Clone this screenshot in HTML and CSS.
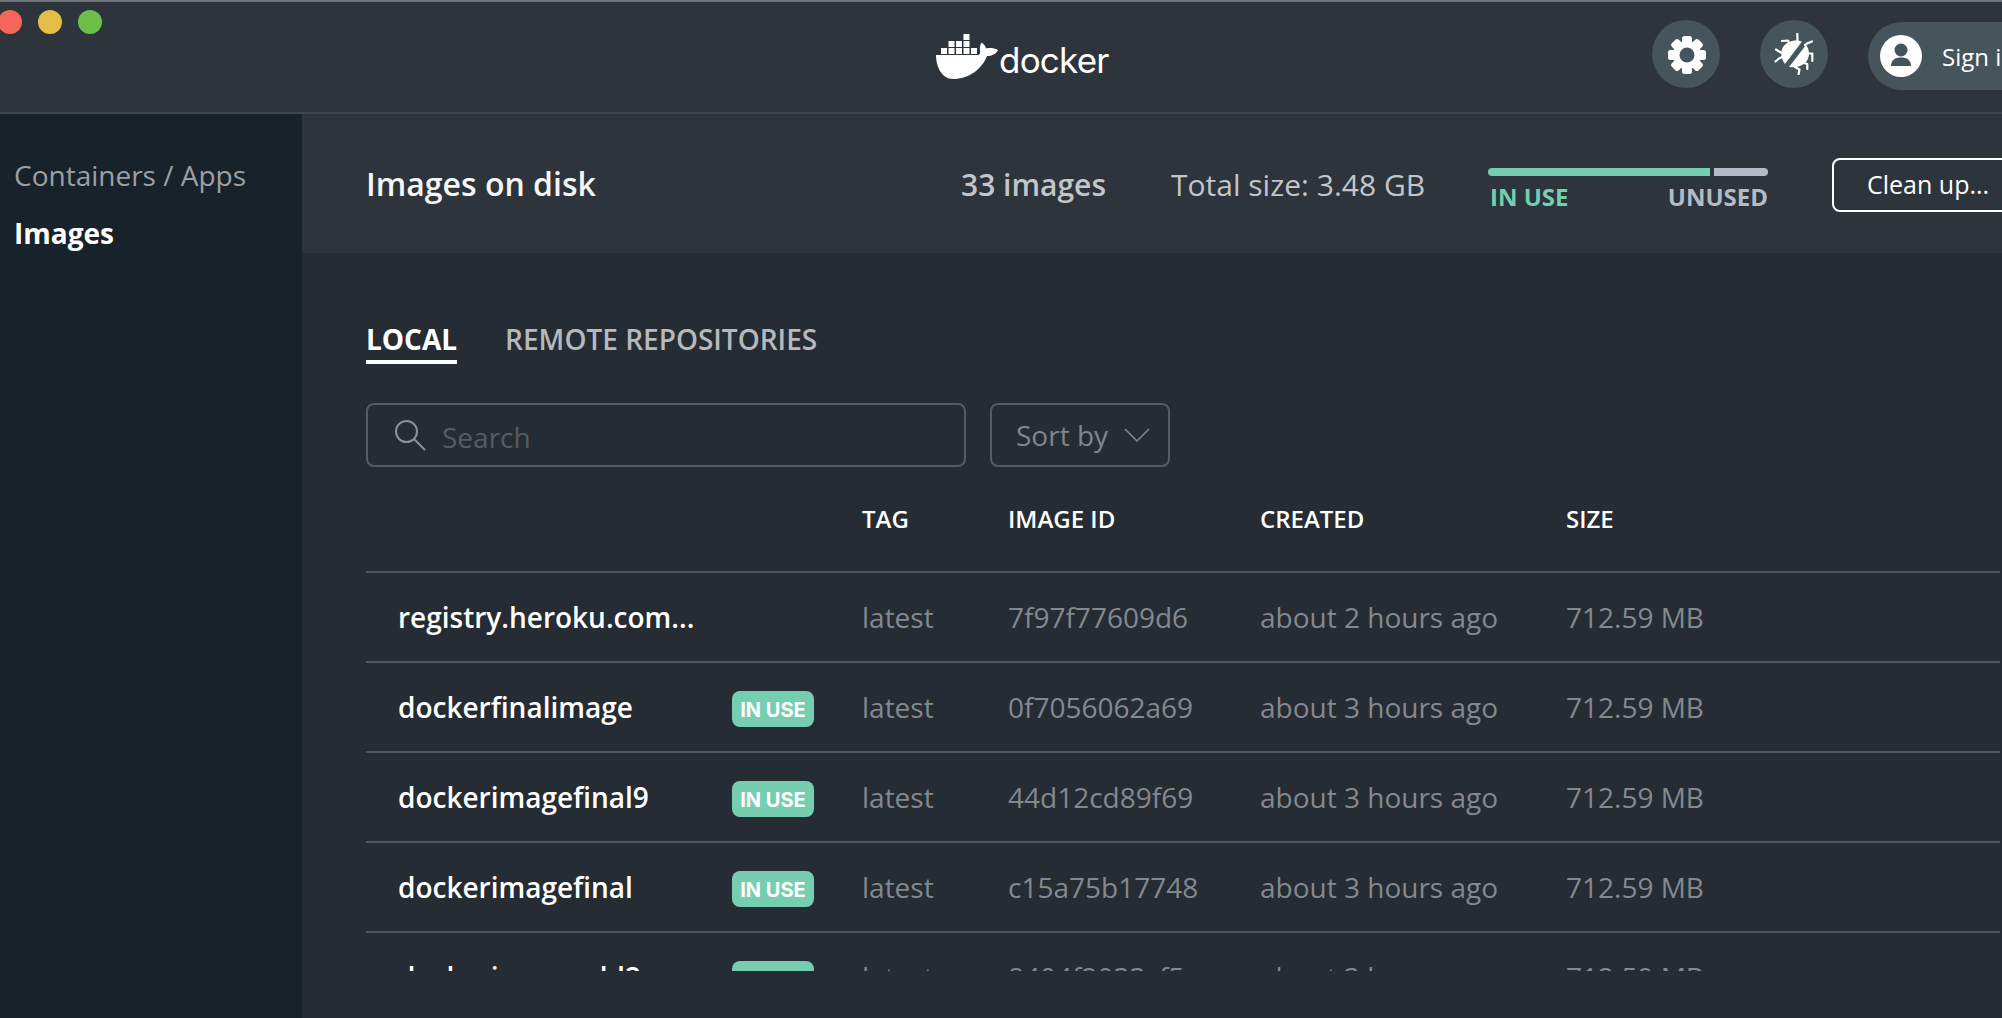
FILE: index.html
```html
<!DOCTYPE html>
<html lang="en">

<head>
    <meta charset="UTF-8">
    <title>Docker Desktop - Images</title>
    <link rel="stylesheet" href="styles.css">
</head>

<body>
    <header class="titlebar">
        <div class="traffic">
            <span class="dot red"></span>
            <span class="dot yellow"></span>
            <span class="dot green"></span>
        </div>
        <div class="logo">
            <svg class="whale" viewBox="0 0 62 45" width="62" height="45">
                <g fill="#fff">
                    <rect x="5" y="14" width="6" height="6" />
                    <rect x="12.500" y="14" width="6" height="6" />
                    <rect x="20" y="14" width="6" height="6" />
                    <rect x="27.500" y="14" width="6" height="6" />
                    <rect x="35" y="14" width="6" height="6" />
                    <rect x="12.500" y="7" width="6" height="6" />
                    <rect x="20" y="7" width="6" height="6" />
                    <rect x="27.500" y="7" width="6" height="6" />
                    <rect x="27.500" y="0" width="6" height="6" />
                    <path d="M0 21h42c2-.5 2.500-2 2-5-.5-3 .5-6 1.500-7.500 2.500 1.500 4 3.500 4.500 6 4-1 8-.5 12 1.500-2 4-6 6-11 6C46 35 33 45 17 45 6 45 0 33 0 21z" />
                </g>
            </svg>
            <span class="wordmark">docker</span>
        </div>
        <div class="actions">
            <button class="round-btn" aria-label="Settings">
                <svg viewBox="-1 -1 40 40" width="40" height="40">
                    <g fill="#fff">
                        <rect x="15" y="1" width="10" height="38" rx="2.500" />
                        <rect x="15" y="1" width="10" height="38" rx="2.500" transform="rotate(45 20 20)" />
                        <rect x="15" y="1" width="10" height="38" rx="2.500" transform="rotate(90 20 20)" />
                        <rect x="15" y="1" width="10" height="38" rx="2.500" transform="rotate(135 20 20)" />
                        <circle cx="20" cy="20" r="14" />
                    </g>
                    <circle cx="20" cy="20" r="7.500" fill="#46545c" />
                </svg>
            </button>
            <button class="round-btn" aria-label="Troubleshoot">
                <svg viewBox="0 0 40 42" width="40" height="42">
                    <g fill="none" stroke="#fff" stroke-width="2.200" stroke-linejoin="round" stroke-linecap="round">
                        <path d="M23.500 8 23.300 1" />
                        <path d="M8 8 14 7.500 16 12" />
                        <path d="M8 20 6 19 2 16.500" />
                        <path d="M8 24 5 25.500 1.500 28.500" />
                        <path d="M31 12 33 10.500 38 8.500" />
                        <path d="M33 20.500 38.300 20.500 38.300 28" />
                        <path d="M30 30 33.300 31 33.300 36" />
                        <path d="M21 34 25.500 36.500 24.500 41.500" />
                    </g>
                    <path d="M28 8.500 11 31C7 26 6 19 9 14 13 8 21 6 28 8.500z" fill="#fff" />
                    <path d="M32 12C36 17 36 24 32 29 27 34 20 35 15 34z" fill="#fff" />
                </svg>
            </button>
            <button class="signin">
                <svg viewBox="0 0 42 42" width="42" height="42">
                    <circle cx="21" cy="21" r="21" fill="#fff" />
                    <circle cx="21" cy="15" r="6.500" fill="#46545c" />
                    <path d="M11 31c0-6 4-8.500 10-8.500s10 2.500 10 8.500z" fill="#46545c" />
                </svg>
                <span>Sign in</span>
            </button>
        </div>
    </header>

    <div class="app">
        <nav class="sidebar">
            <a class="nav-item">Containers / Apps</a>
            <a class="nav-item active">Images</a>
        </nav>

        <main class="content">
            <section class="summary">
                <h1>Images on disk</h1>
                <span class="count">33 images</span>
                <span class="total">Total size: 3.48 GB</span>
                <div class="usage">
                    <div class="bar">
                        <span class="bar-used"></span>
                        <span class="bar-free"></span>
                    </div>
                    <div class="usage-labels">
                        <span class="in-use">IN USE</span>
                        <span class="unused">UNUSED</span>
                    </div>
                </div>
                <button class="cleanup">Clean up...</button>
            </section>

            <section class="images">
                <div class="tabs">
                    <a class="tab active">LOCAL</a>
                    <a class="tab">REMOTE REPOSITORIES</a>
                </div>

                <div class="filters">
                    <div class="search">
                        <svg viewBox="0 0 32 32" width="32" height="32" fill="none" stroke="#8b9197" stroke-width="2">
                            <circle cx="12.500" cy="12.500" r="10.500" />
                            <path d="M20 20 31 31" />
                        </svg>
                        <span>Search</span>
                    </div>
                    <div class="sort">
                        <span>Sort by</span>
                        <svg viewBox="0 0 26 14" width="26" height="14" fill="none" stroke="#7f868c" stroke-width="1.500">
                            <path d="M1 1 13 13 25 1" />
                        </svg>
                    </div>
                </div>

                <div class="row head">
                    <span></span>
                    <span>TAG</span>
                    <span>IMAGE ID</span>
                    <span>CREATED</span>
                    <span>SIZE</span>
                </div>

                <div class="table-body">
                    <div class="row">
                        <span class="name">registry.heroku.com...</span>
                        <span>latest</span>
                        <span>7f97f77609d6</span>
                        <span>about 2 hours ago</span>
                        <span>712.59 MB</span>
                    </div>
                    <div class="row">
                        <span class="name">dockerfinalimage<b class="badge">IN USE</b></span>
                        <span>latest</span>
                        <span>0f7056062a69</span>
                        <span>about 3 hours ago</span>
                        <span>712.59 MB</span>
                    </div>
                    <div class="row">
                        <span class="name">dockerimagefinal9<b class="badge">IN USE</b></span>
                        <span>latest</span>
                        <span>44d12cd89f69</span>
                        <span>about 3 hours ago</span>
                        <span>712.59 MB</span>
                    </div>
                    <div class="row">
                        <span class="name">dockerimagefinal<b class="badge">IN USE</b></span>
                        <span>latest</span>
                        <span>c15a75b17748</span>
                        <span>about 3 hours ago</span>
                        <span>712.59 MB</span>
                    </div>
                    <div class="row">
                        <span class="name">dockerimagemld2<b class="badge">IN USE</b></span>
                        <span>latest</span>
                        <span>8404f2033cf5</span>
                        <span>about 3 hours ago</span>
                        <span>712.59 MB</span>
                    </div>
                </div>
            </section>
        </main>
    </div>
</body>

</html>
```

FILE: styles.css
```css
html,
body {
    height: 100%;
}

body {
    margin: 0;
    width: 2002px;
    height: 1018px;
    overflow: hidden;
    display: flex;
    flex-direction: column;
    background: #252c33;
    color: #fff;
    font-family: "Open Sans", sans-serif;
}

button {
    font-family: inherit;
    color: inherit;
    border: 0;
    padding: 0;
    background: none;
}

/* title bar */
.titlebar {
    flex: none;
    height: 110px;
    position: relative;
    display: flex;
    align-items: flex-start;
    background: #2d343c;
    border-top: 2px solid #6c7277;
    border-bottom: 2px solid #3f464d;
}

.traffic {
    display: flex;
    gap: 16px;
    margin: 8px 0 0 -2px;
}

.dot {
    width: 24px;
    height: 24px;
    border-radius: 50%;
}

.red {
    background: #f4665c;
}

.yellow {
    background: #e3bf4a;
}

.green {
    background: #6cc04a;
}

.logo {
    position: absolute;
    left: 936px;
    top: 32px;
    display: flex;
    align-items: flex-end;
    gap: 1px;
}

.wordmark {
    font-family: "Inter", sans-serif;
    font-weight: 400;
    font-size: 35px;
    line-height: 45px;
    letter-spacing: -0.8px;
    margin-bottom: -4px;
}

.actions {
    position: absolute;
    left: 1652px;
    top: 18px;
    display: flex;
    gap: 40px;
}

.round-btn {
    width: 68px;
    height: 68px;
    border-radius: 50%;
    background: #46545c;
    display: flex;
    align-items: center;
    justify-content: center;
}

.signin {
    flex: none;
    width: 200px;
    height: 68px;
    margin-top: 2px;
    border-radius: 34px;
    background: #46545c;
    display: flex;
    align-items: center;
    gap: 20px;
    padding-left: 12px;
    font-size: 24px;
    box-sizing: border-box;
}

/* page */
.app {
    flex: 1;
    display: flex;
    min-height: 0;
}

.sidebar {
    flex: none;
    width: 302px;
    box-sizing: border-box;
    padding: 42px 0 0 14px;
    background: #18222b;
    display: flex;
    flex-direction: column;
    gap: 20px;
}

.nav-item {
    font-size: 28px;
    line-height: 38px;
    color: #9ba0a4;
}

.nav-item.active {
    color: #fff;
    font-weight: 700;
}

.content {
    flex: 1;
    min-width: 0;
}

.summary {
    height: 139px;
    display: flex;
    align-items: center;
    padding-left: 64px;
    background: #2d343c;
}

.summary > * {
    flex: none;
}

.summary h1 {
    margin: 0;
    width: 595px;
    font-size: 32px;
    font-weight: 600;
    color: #f4f5f5;
}

.count {
    width: 210px;
    margin-top: 2px;
    font-size: 30px;
    font-weight: 600;
    color: #c3c6c9;
}

.total {
    width: 317px;
    margin-top: 2px;
    font-size: 30px;
    color: #c3c6c9;
}

.usage {
    width: 280px;
    margin: 14px 64px 0 0;
}

.bar {
    display: flex;
    gap: 4px;
    height: 8px;
}

.bar-used {
    flex: 222;
    background: #75ceb0;
    border-radius: 4px 0 0 4px;
}

.bar-free {
    flex: 54;
    background: #b3bcc6;
    border-radius: 0 4px 4px 0;
}

.usage-labels {
    display: flex;
    justify-content: space-between;
    margin-top: 5px;
    font-size: 24px;
    line-height: 32px;
    font-weight: 700;
}

.in-use {
    color: #75ceb0;
    margin-left: 2px;
}

.unused {
    color: #b3bcc6;
}

.cleanup {
    width: 200px;
    height: 54px;
    margin-top: 2px;
    padding: 0 0 2px 33px;
    box-sizing: border-box;
    border: 2px solid #fff;
    border-radius: 8px;
    font-size: 25px;
    text-align: left;
}

/* images list */
.images {
    padding: 0 0 0 64px;
}

.tabs {
    display: flex;
    gap: 48px;
    padding-top: 67px;
}

.tab {
    font-size: 28px;
    font-weight: 600;
    line-height: 38px;
    padding-bottom: 2px;
    color: #b5b9bd;
}

.tab.active {
    color: #fff;
    font-weight: 700;
    border-bottom: 4px solid #fff;
}

.filters {
    display: flex;
    gap: 24px;
    margin-top: 39px;
}

.search,
.sort {
    height: 64px;
    box-sizing: border-box;
    border: 2px solid #565c62;
    border-radius: 8px;
    display: flex;
    align-items: center;
}

.search {
    width: 600px;
    padding-left: 26px;
    gap: 16px;
    font-size: 28px;
    color: #565c62;
}

.search span {
    margin-top: 4px;
}

.sort {
    width: 180px;
    padding-left: 24px;
    gap: 16px;
    font-size: 28px;
    color: #7f868c;
}

.row {
    display: grid;
    grid-template-columns: 496px 146px 252px 306px 1fr;
    align-items: center;
    height: 88px;
    width: 1634px;
    border-bottom: 2px solid #54575a;
    font-size: 28px;
    color: #83898f;
}

.row.head {
    height: 104px;
    margin-top: 2px;
    padding-bottom: 4px;
    box-sizing: border-box;
    font-size: 24px;
    font-weight: 600;
    color: #fff;
}

.table-body {
    height: 398px;
    overflow: hidden;
}

.name {
    display: flex;
    align-items: center;
    padding-left: 32px;
    color: #fff;
    font-weight: 600;
    position: relative;
}

.badge {
    position: absolute;
    left: 366px;
    top: 3px;
    width: 82px;
    height: 36px;
    box-sizing: border-box;
    border-radius: 8px;
    background: #75ceb0;
    color: #fff;
    font-family: "Inter", sans-serif;
    font-size: 20px;
    font-weight: 700;
    line-height: 38px;
    text-align: center;
}
```
